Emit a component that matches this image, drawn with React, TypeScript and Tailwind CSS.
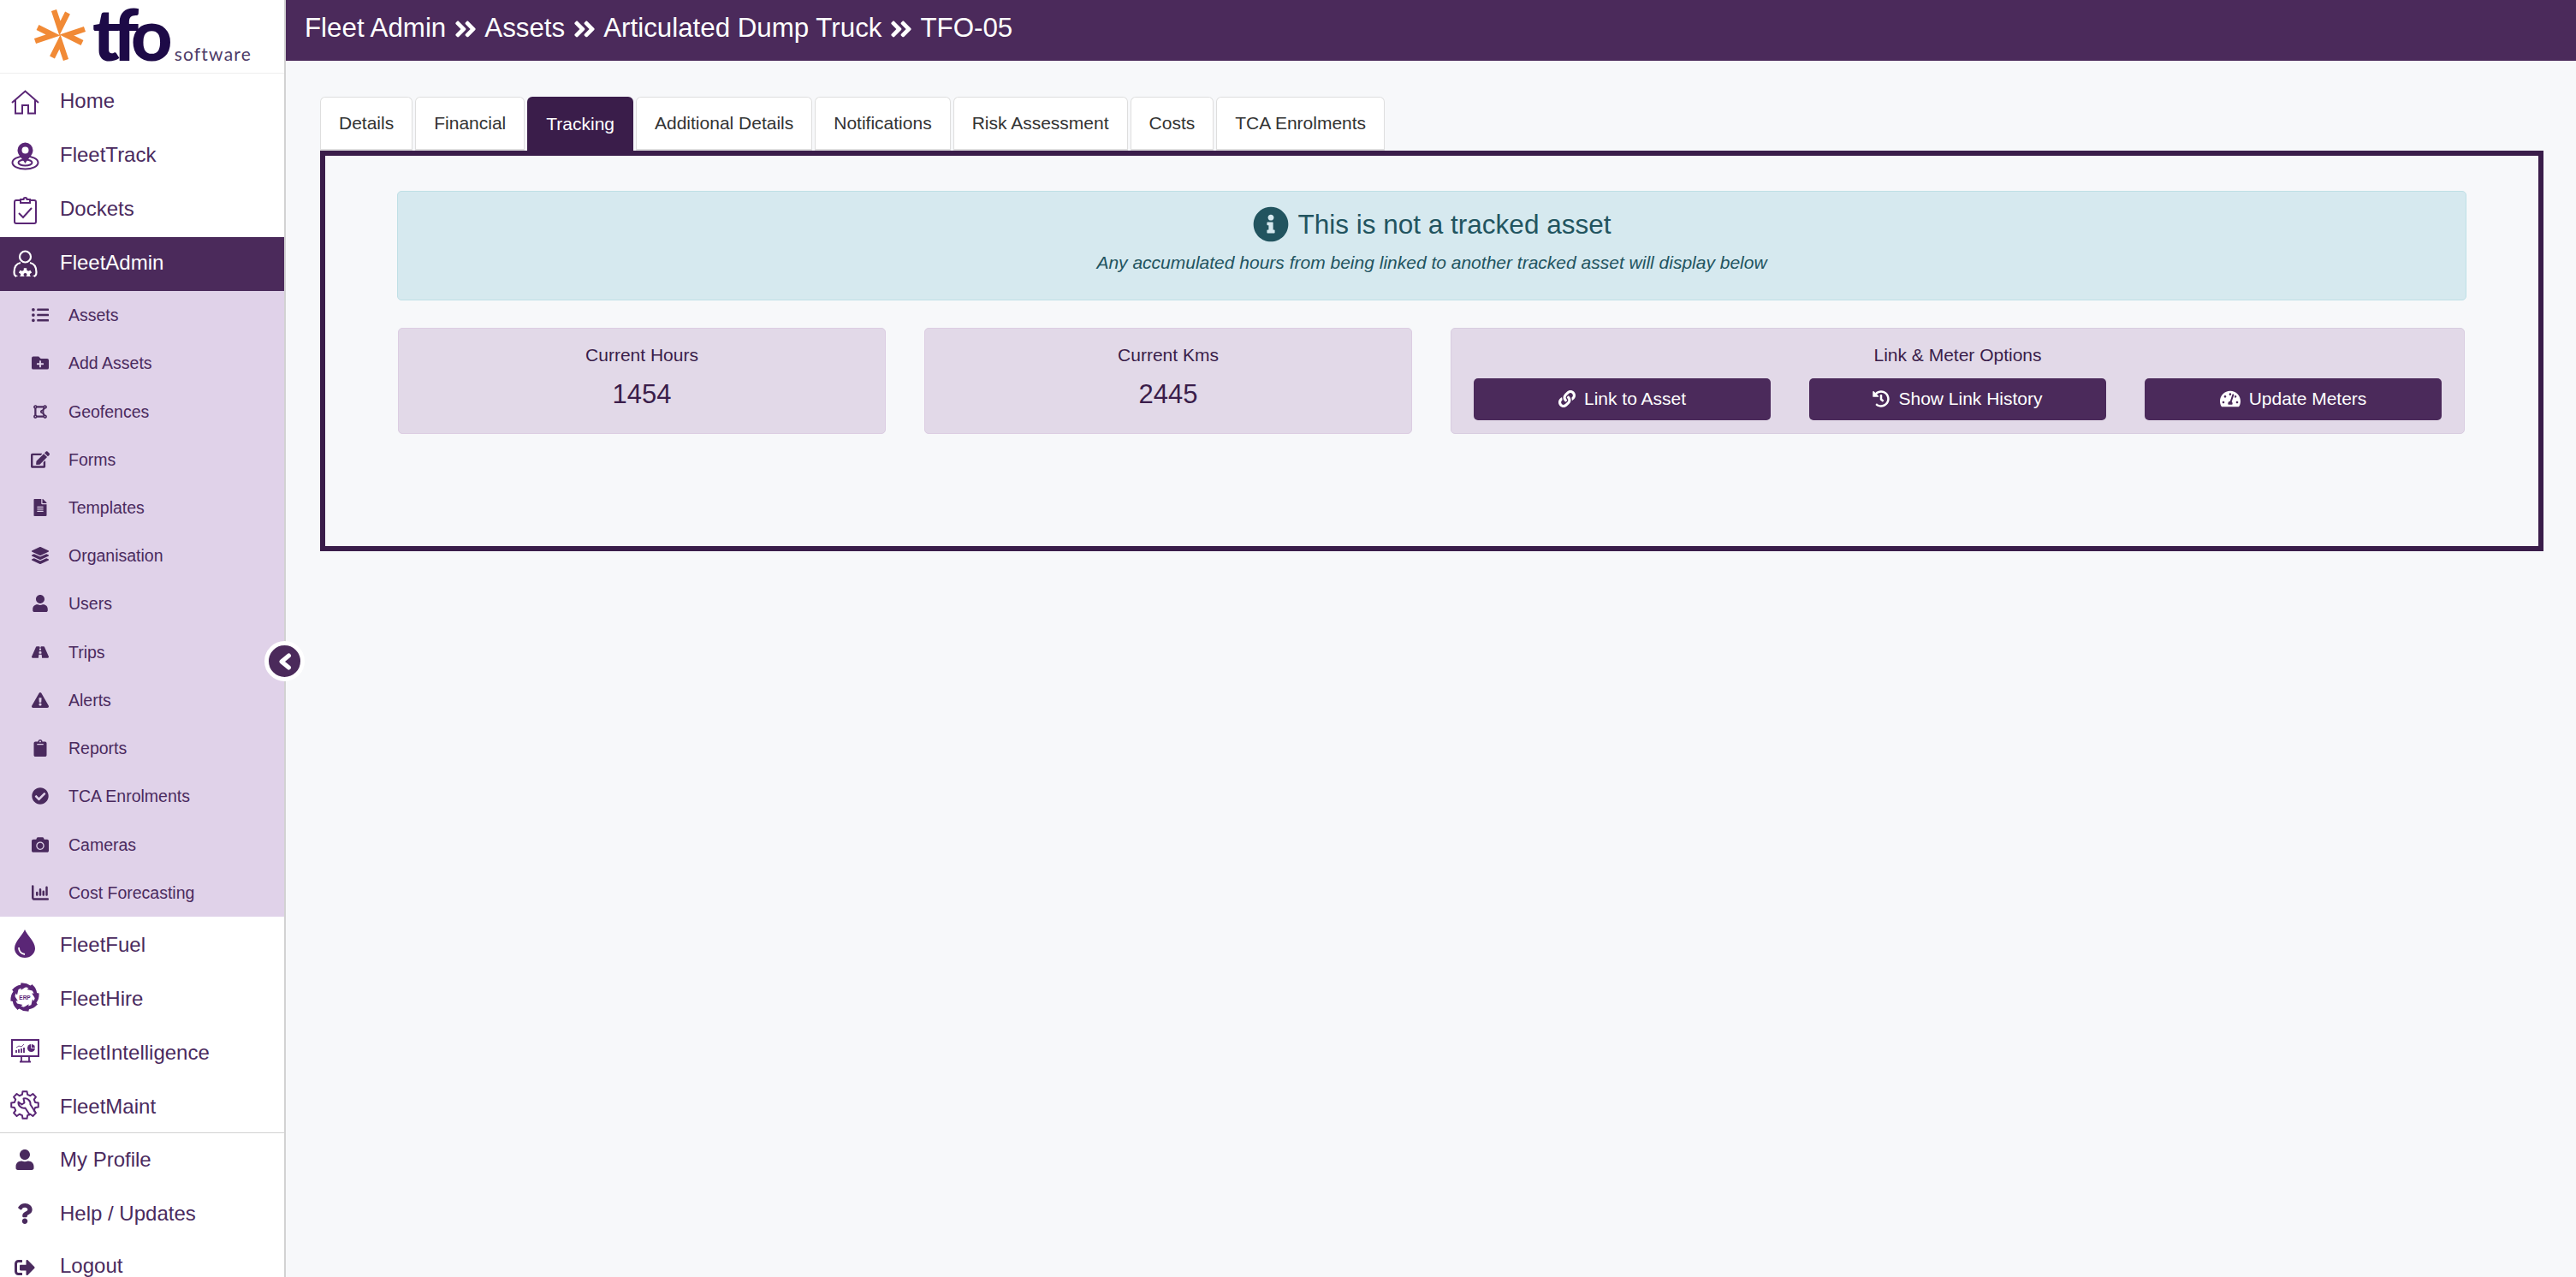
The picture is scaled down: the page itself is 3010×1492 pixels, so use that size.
import React from "react";
import {
  FaListUl, FaFolderPlus, FaDrawPolygon, FaEdit, FaFileAlt, FaLayerGroup, FaUser, FaRoad,
  FaExclamationTriangle, FaClipboard, FaCheckCircle, FaCamera, FaSignOutAlt, FaQuestion,
  FaAngleDoubleRight, FaInfoCircle, FaLink, FaHistory, FaTachometerAlt,
} from "react-icons/fa";
import { FaChartColumn } from "react-icons/fa6";

const P = "#5a2676";

function gearPath(cx: number, cy: number, r1: number, r2: number, n: number) {
  const pts: string[] = [];
  const step = (Math.PI * 2) / n;
  for (let i = 0; i < n; i++) {
    const a = i * step - Math.PI / 2;
    const p = (r: number, d: number) => `${(cx + r * Math.cos(a + d * step)).toFixed(2)} ${(cy + r * Math.sin(a + d * step)).toFixed(2)}`;
    pts.push(p(r1, -0.32), p(r2, -0.2), p(r2, 0.2), p(r1, 0.32));
  }
  return "M" + pts.join("L") + "Z";
}

const HomeIcon = () => (
  <svg width="33" height="29" viewBox="0 0 33 29" fill="none" stroke={P} strokeWidth="2">
    <path d="M1 15 16.500 1.500 32 15" />
    <path d="M5 11.500V27.500H13V18H20V27.500H28V11.500" />
  </svg>
);
const TrackIcon = () => (
  <svg width="33" height="33" viewBox="0 0 33 33" fill="none">
    <ellipse cx="16.500" cy="24" rx="15" ry="7.500" stroke={P} strokeWidth="2" />
    <ellipse cx="16.500" cy="24" rx="8" ry="3.500" stroke={P} strokeWidth="2" />
    <path fillRule="evenodd" fill={P} d="M16.500 25C13 19 7.500 15 7.500 9.500a9 9 0 0 1 18 0C25.500 15 20 19 16.500 25ZM16.500 5.500a4 4 0 1 0 0 8 4 4 0 0 0 0-8Z" />
  </svg>
);
const DocketIcon = () => (
  <svg width="27" height="33" viewBox="0 0 27 33" fill="none" stroke={P} strokeWidth="2">
    <path d="M8 5H3a2 2 0 0 0-2 2v23a2 2 0 0 0 2 2h21a2 2 0 0 0 2-2V7a2 2 0 0 0-2-2h-5" />
    <path d="M8 8V4h3.500a2 2 0 0 1 4 0H19v4Z" />
    <path d="M6 20l5 5L21 14" />
  </svg>
);
const AdminIcon = () => (
  <svg width="29" height="33" viewBox="0 0 29 33" fill="none" stroke="#fff" strokeWidth="2.200">
    <circle cx="14.500" cy="8" r="6.500" />
    <path d="M9 15C4 16 1.500 20 1.500 26c0 3 1 5 4 5" />
    <path d="M20 15c5 1 7.500 5 7.500 11 0 3-1 5-4 5" />
    <path stroke="none" fill="#fff" d={gearPath(14.5, 29, 5.5, 8, 6)} />
    <circle cx="14.500" cy="29" r="2" fill="#4b2a5b" stroke="none" />
    <rect x="4" y="31" width="21" height="3" fill="#4b2a5b" stroke="none" />
  </svg>
);
const DropIcon = () => (
  <svg width="24" height="33" viewBox="0 0 24 33">
    <path fill={P} d="M12 0C10 6 0 14 0 22a12 11 0 0 0 24 0C24 14 14 6 12 0Z" />
    <path fill="none" stroke="#fff" strokeWidth="1.800" d="M5 21c0 4 2 7 7 8" />
  </svg>
);
const ErpIcon = () => (
  <svg width="34" height="34" viewBox="0 0 34 34">
    {[0, 45, 90, 135, 180, 225, 270, 315].map((a) => (
      <path key={a} transform={`rotate(${a} 17 17)`} fill={P} d="M13 .5Q19 0 23.500 3.500L26 2 26 9.500 19.500 8 21.500 6.500Q17.500 4.500 14 5.500Z" />
    ))}
    <text x="17" y="19.500" textAnchor="middle" fontSize="6.500" fontWeight="700" fill={P} fontFamily="'Liberation Sans', sans-serif">ERP</text>
  </svg>
);
const MonitorIcon = () => (
  <svg width="33" height="28" viewBox="0 0 33 28" fill="none">
    <rect x="1" y="1" width="31" height="19" stroke={P} strokeWidth="2" />
    <path d="M12 20v6M21 20v6M10 26.500h13" stroke={P} strokeWidth="1.800" />
    <path d="M6 16v-3M9 16v-4M12 16v-5M15 16v-6" stroke={P} strokeWidth="1.800" />
    <path d="M6 10l3-2 3 1 3-3" stroke={P} strokeWidth="0.800" />
    <circle cx="23.500" cy="10.500" r="4.500" fill={P} />
    <path d="M23.500 10.500V6M23.500 10.500H28" stroke="#fff" strokeWidth="0.800" />
  </svg>
);
const MaintIcon = () => (
  <svg width="34" height="34" viewBox="0 0 34 34" fill="none" stroke={P} strokeWidth="2" strokeLinejoin="round">
    <path d={gearPath(17, 17, 12.5, 16, 8)} />
    <path d="M23 29 17.500 20.500C13 21.500 9 18 9.500 13.500L13.500 16.500 16.500 14.500 15.500 9.500C20 8.500 24 12 23.500 16.500L29 25" />
  </svg>
);

const Logo = () => (
  <div className="h-[86px] shrink-0 border-b border-[#eeeeee] flex items-start">
    <svg width="62" height="66" viewBox="0 0 62 66" className="ml-[39px] mt-[9px] shrink-0" fill="none" stroke="#f18a36" strokeWidth="6.500">
      {[0, 90, 180, 270].map((a) => (
        <path key={a} transform={`rotate(${a} 31 32)`} d="M24 3 31 24 40 6" strokeLinejoin="miter" />
      ))}
    </svg>
    <span className="ml-[7px] mt-[6px] text-[#1d0a47] text-[84px] leading-[66px] tracking-[-8px] font-black" style={{ fontFamily: "Lato, sans-serif" }}>tfo</span>
    <span className="ml-[10px] mt-[50px] text-[#4d3b68] text-[21px] leading-[26px] tracking-[1.200px]" style={{ fontFamily: "Lato, sans-serif" }}>software</span>
  </div>
);

function MainRow({ icon, label, active, shift }: { icon: React.ReactNode; label: string; active?: boolean; shift?: string }) {
  return (
    <div className={`flex h-[63px] shrink-0 items-center ${active ? "bg-[#4b2a5b] text-white" : "text-[#4a2a5e]"}`}>
      <span className="flex w-[58px] shrink-0 justify-center">{icon}</span>
      <span className={`ml-[12px] text-[24px] leading-[24px] ${shift ?? ""}`}>{label}</span>
    </div>
  );
}

function SubRow({ icon, label }: { icon: React.ReactNode; label: string }) {
  return (
    <div className="flex h-[56.23px] shrink-0 items-center text-[#4a2a5e]">
      <span className="ml-[30px] flex w-[33px] shrink-0 justify-center">{icon}</span>
      <span className="ml-[17px] text-[19.5px] leading-[26px]">{label}</span>
    </div>
  );
}

const subs: [React.ReactNode, string][] = [
  [<FaListUl size={20} />, "Assets"],
  [<FaFolderPlus size={20} />, "Add Assets"],
  [<FaDrawPolygon size={18} />, "Geofences"],
  [<FaEdit size={22} />, "Forms"],
  [<FaFileAlt size={20} />, "Templates"],
  [<FaLayerGroup size={20} />, "Organisation"],
  [<FaUser size={20} />, "Users"],
  [<FaRoad size={20} />, "Trips"],
  [<FaExclamationTriangle size={20} />, "Alerts"],
  [<FaClipboard size={20} />, "Reports"],
  [<FaCheckCircle size={20} />, "TCA Enrolments"],
  [<FaCamera size={20} />, "Cameras"],
  [<FaChartColumn size={20} />, "Cost Forecasting"],
];

const tabs = ["Details", "Financial", "Tracking", "Additional Details", "Notifications", "Risk Assessment", "Costs", "TCA Enrolments"];

function Stat({ label, value }: { label: string; value: string }) {
  return (
    <div className="flex h-[124px] flex-col items-center rounded-[5px] border border-[#dccde2] bg-[#e2d9e8] text-[#3a1d4a]">
      <span className="mt-[17px] text-[21px] leading-[28px]">{label}</span>
      <span className="mt-[14px] text-[31px] leading-[36px]">{value}</span>
    </div>
  );
}

function ActionButton({ icon, label }: { icon: React.ReactNode; label: string }) {
  return (
    <div className="flex h-[49px] items-center justify-center gap-[10px] rounded-[5px] bg-[#4b2a5b] pb-[2px] text-[21px] text-white">
      {icon}
      <span>{label}</span>
    </div>
  );
}

export default function App() {
  return (
    <div className="flex h-[1492px] w-[3010px] overflow-hidden bg-[#f7f8fa]" style={{ fontFamily: "'Liberation Sans', Arial, sans-serif" }}>
      <aside className="relative flex w-[334px] shrink-0 flex-col border-r-2 border-[#d2d2d2] bg-white">
        <div className="flex h-full flex-col overflow-hidden">
          <Logo />
          <div className="h-[2px] shrink-0" />
          <MainRow icon={<HomeIcon />} label="Home" shift="mb-[4px]" />
          <MainRow icon={<TrackIcon />} label="FleetTrack" shift="mb-[4px]" />
          <MainRow icon={<DocketIcon />} label="Dockets" shift="mb-[4px]" />
          <MainRow icon={<AdminIcon />} label="FleetAdmin" active shift="mb-[4px]" />
          <div className="flex shrink-0 flex-col bg-[#e0d2e9]">
            {subs.map(([icon, label]) => (
              <SubRow key={label} icon={icon} label={label} />
            ))}
          </div>
          <MainRow icon={<DropIcon />} label="FleetFuel" shift="mt-[4px]" />
          <MainRow icon={<ErpIcon />} label="FleetHire" shift="mt-[4px]" />
          <MainRow icon={<MonitorIcon />} label="FleetIntelligence" shift="mt-[4px]" />
          <MainRow icon={<MaintIcon />} label="FleetMaint" shift="mt-[4px]" />
          <div className="h-[1px] shrink-0 bg-[#d2d2d2]" />
          <MainRow icon={<FaUser size={24} />} label="My Profile" />
          <MainRow icon={<FaQuestion size={24} />} label="Help / Updates" />
          <MainRow icon={<FaSignOutAlt size={24} />} label="Logout" shift="mb-[4px]" />
        </div>
        <div className="absolute left-[309px] top-[749px] z-10 flex h-[47px] w-[47px] items-center justify-center rounded-full border-[5px] border-white bg-[#4b2a5b]">
          <svg width="16" height="20" viewBox="0 0 16 20" fill="none" stroke="#fff" strokeWidth="5" strokeLinecap="round" strokeLinejoin="round">
            <path d="M12.500 3 4 10l8.500 7" />
          </svg>
        </div>
      </aside>

      <main className="flex min-w-0 flex-1 flex-col">
        <header className="flex h-[71px] shrink-0 items-center gap-[7.5px] bg-[#4b2a5b] pl-[22px] pb-[4px] text-[31.3px] text-white">
          <span>Fleet Admin</span>
          <FaAngleDoubleRight size={30} />
          <span>Assets</span>
          <FaAngleDoubleRight size={30} />
          <span>Articulated Dump Truck</span>
          <FaAngleDoubleRight size={30} />
          <span>TFO-05</span>
        </header>

        <div className="ml-[40px] mr-[38px] mt-[42px] flex flex-col">
          <div className="flex gap-[3px]">
            {tabs.map((t) => (
              <div
                key={t}
                className={
                  t === "Tracking"
                    ? "flex h-[63px] items-center rounded-t-[6px] bg-[#3a1d4a] px-[22px] text-[21px] text-white"
                    : "flex h-[63px] items-center rounded-t-[6px] border border-b-2 border-[#dedede] bg-white px-[21px] text-[21px] text-[#333333]"
                }
              >
                {t}
              </div>
            ))}
          </div>
          <section className="flex h-[468px] flex-col border-[6px] border-[#3a1d4a] px-[84px] pt-[41px]">
            <div className="flex h-[128px] flex-col items-center rounded-[5px] border border-[#bfe0e6] bg-[#d6e9ef] text-[#22545f]">
              <div className="mt-[17px] flex items-center gap-[11px]">
                <FaInfoCircle size={42} />
                <span className="text-[31.5px] leading-[42px]">This is not a tracked asset</span>
              </div>
              <span className="mt-[10px] text-[21px] italic leading-[28px]">Any accumulated hours from being linked to another tracked asset will display below</span>
            </div>
            <div className="ml-[1px] mr-[2px] mt-[32px] grid grid-cols-4 gap-[45px]">
              <Stat label="Current Hours" value="1454" />
              <Stat label="Current Kms" value="2445" />
              <div className="col-span-2 flex h-[124px] flex-col rounded-[5px] border border-[#d8cde0] bg-[#e2d9e8] px-[26px] text-[#3a1d4a]">
                <span className="mt-[17px] text-center text-[21px] leading-[28px]">Link &amp; Meter Options</span>
                <div className="mt-[13px] grid grid-cols-3 gap-[45px]">
                  <ActionButton icon={<FaLink size={20} />} label="Link to Asset" />
                  <ActionButton icon={<FaHistory size={20} />} label="Show Link History" />
                  <ActionButton icon={<FaTachometerAlt size={24} />} label="Update Meters" />
                </div>
              </div>
            </div>
          </section>
        </div>
      </main>
    </div>
  );
}
